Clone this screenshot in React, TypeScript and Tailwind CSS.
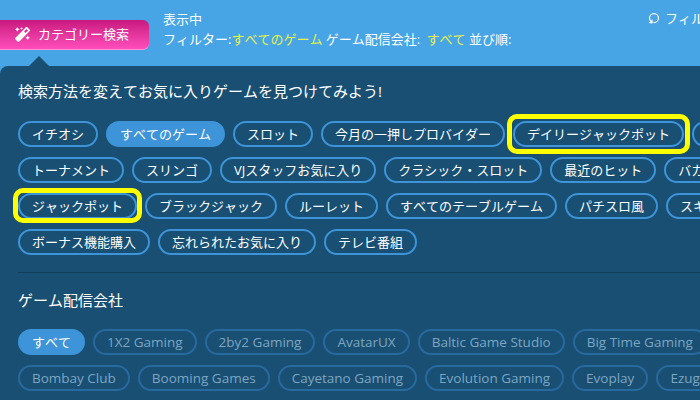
import React from 'react';
import { RotateCcw } from 'lucide-react';
import { FaMagic } from 'react-icons/fa';

const rows = [
  ['イチオシ', 'すべてのゲーム', 'スロット', '今月の一押しプロバイダー', 'デイリージャックポット', ''],
  ['トーナメント', 'スリンゴ', 'VJスタッフお気に入り', 'クラシック・スロット', '最近のヒット', 'バカラ'],
  ['ジャックポット', 'ブラックジャック', 'ルーレット', 'すべてのテーブルゲーム', 'パチスロ風', 'スキル'],
  ['ボーナス機能購入', '忘れられたお気に入り', 'テレビ番組'],
];

const providers = [
  ['すべて', '1X2 Gaming', '2by2 Gaming', 'AvatarUX', 'Baltic Game Studio', 'Big Time Gaming'],
  ['Bombay Club', 'Booming Games', 'Cayetano Gaming', 'Evolution Gaming', 'Evoplay', 'Ezugi'],
];

function Chip({ label }: { label: string }) {
  const active = label === 'すべてのゲーム';
  return (
    <div
      className={`relative h-[26px] shrink-0 rounded-full border-2 border-[#3d94d9] px-3 text-[13px] leading-[22px] whitespace-nowrap text-white ${active ? 'bg-[#3d94d9]' : ''}`}
    >
      {label}
      {/* yellow call-outs drawn over the chip */}
      {label === 'デイリージャックポット' && (
        <div className="absolute -top-[9px] -right-2 -bottom-[9px] -left-2 rounded-[10px] border-[5px] border-[#ffff00]" />
      )}
      {label === 'ジャックポット' && (
        <div className="absolute -top-[7px] -right-[7px] -bottom-[6px] -left-[7px] rounded-[10px] border-[5px] border-[#ffff00]" />
      )}
    </div>
  );
}

function ProviderChip({ label }: { label: string }) {
  const active = label === 'すべて';
  return (
    <div
      className={`h-[26px] shrink-0 rounded-full border-2 px-3 leading-[22px] whitespace-nowrap ${
        active
          ? 'border-[#3d94d9] bg-[#3d94d9] text-[13px] text-white'
          : 'border-[#28699f] text-[13.5px] text-[#7da6c2] [font-kerning:normal]'
      }`}
    >
      {label}
    </div>
  );
}

export default function App() {
  return (
    <div className="h-[400px] w-[700px] overflow-hidden bg-[#47a5e6] font-['Open_Sans','Noto_Sans_CJK_JP',sans-serif] text-[13px] text-white [font-kerning:none]">
      {/* Top bar */}
      <div className="flex h-[66px]">
        <div className="relative w-[163px] shrink-0 pt-5">
          <div className="flex h-[30px] w-[149px] items-center gap-2 rounded-r-md border-b border-[#ff8fd8] bg-gradient-to-b from-[#c9177f] to-[#ff4dbb] pl-[15px]">
            <FaMagic className="h-[15px] w-[15px]" />
            <span>カテゴリー検索</span>
          </div>
          <div className="absolute bottom-0 left-[29px] h-0 w-0 border-x-[10px] border-b-[10px] border-x-transparent border-b-[#184f73]" />
        </div>
        <div className="flex-1 pt-[9px] leading-5">
          <div>表示中</div>
          <div className="whitespace-nowrap">
            フィルター:<span className="text-[#e8f04a]">すべてのゲーム</span> ゲーム配信会社: <span className="ml-[3px] text-[#e8f04a]">すべて</span> 並び順:
          </div>
        </div>
        <div className="flex w-[52px] shrink-0 items-start gap-[5px] overflow-hidden pt-2 leading-5 whitespace-nowrap">
          <RotateCcw className="mt-1 h-3 w-3 shrink-0 -rotate-90" strokeWidth={2.5} />
          <span>フィルター</span>
        </div>
      </div>

      {/* Search panel */}
      <div className="h-[334px] overflow-hidden rounded-tl-lg bg-[#184f73] pt-[15px] pl-[18px]">
        <h2 className="text-[15px] leading-5">検索方法を変えてお気に入りゲームを見つけてみよう!</h2>
        <div className="mt-5 flex flex-col gap-[10px]">
          {rows.map((row) => (
            <div key={row[0]} className="flex gap-2">
              {row.map((label) => (
                <Chip key={label} label={label} />
              ))}
            </div>
          ))}
        </div>
        <div className="mt-[17px] h-px bg-[#123d5a]" />
        <h2 className="mt-[17px] text-[15px] leading-5">ゲーム配信会社</h2>
        <div className="mt-[19px] flex flex-col gap-[10px]">
          {providers.map((row) => (
            <div key={row[0]} className="flex gap-2">
              {row.map((label) => (
                <ProviderChip key={label} label={label} />
              ))}
            </div>
          ))}
        </div>
      </div>
    </div>
  );
}
